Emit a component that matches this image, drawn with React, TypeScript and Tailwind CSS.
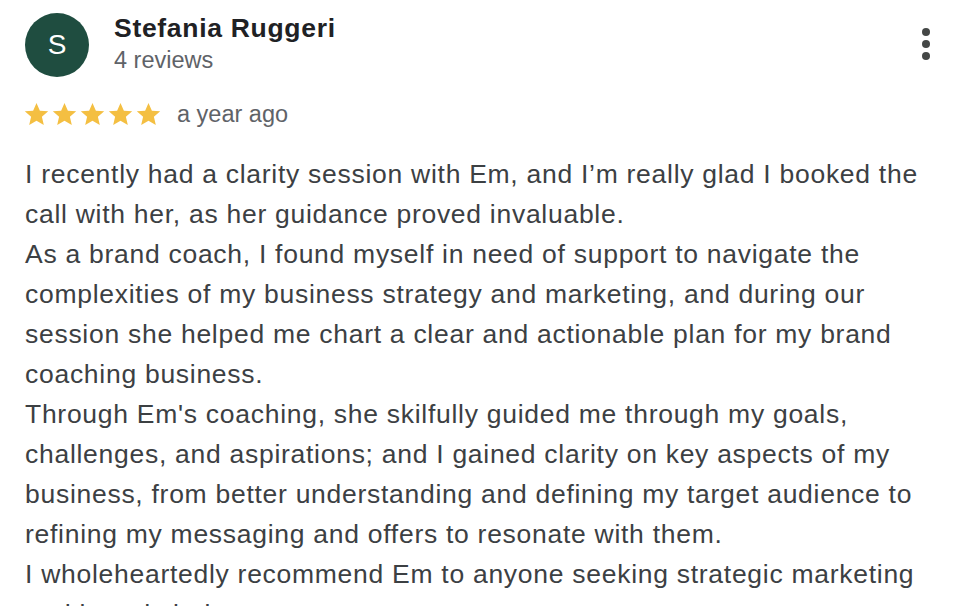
import React from "react";

const paragraphs = [
  "I recently had a clarity session with Em, and I’m really glad I booked the call with her, as her guidance proved invaluable.",
  "As a brand coach, I found myself in need of support to navigate the complexities of my business strategy and marketing, and during our session she helped me chart a clear and actionable plan for my brand coaching business.",
  "Through Em's coaching, she skilfully guided me through my goals, challenges, and aspirations; and I gained clarity on key aspects of my business, from better understanding and defining my target audience to refining my messaging and offers to resonate with them.",
  "I wholeheartedly recommend Em to anyone seeking strategic marketing and brand clarity.",
];

const Star = () => (
  <svg viewBox="0 0 24 24" className="w-[27px] h-[27px]" fill="#f4bf42">
    <path d="M12 1.8l3 6.8 7.4.6-5.6 4.9 1.7 7.2L12 17.5l-6.5 3.8 1.7-7.2-5.6-4.9 7.4-.6z" />
  </svg>
);

const App: React.FC = () => {
  return (
    <div className="w-[978px] h-[606px] overflow-hidden bg-white font-['Liberation_Sans',Arial,sans-serif]">
      <div className="flex items-start pl-[25px] pr-[48px] pt-[12px]">
        <div className="mt-[1px] w-[64px] h-[64px] rounded-full bg-[#1f4d40] flex items-center justify-center text-white text-[28px] leading-none shrink-0">
          S
        </div>
        <div className="ml-[25px] flex-1">
          <div className="text-[26.5px] tracking-[0.7px] font-bold text-[#202124] leading-[32px]">Stefania Ruggeri</div>
          <div className="text-[23.5px] text-[#5f6368] leading-[28px] mt-[2px]">4 reviews</div>
        </div>
        <div className="flex flex-col gap-[4px] pt-[16px]">
          <span className="w-[8px] h-[8px] rounded-full bg-[#444746]" />
          <span className="w-[8px] h-[8px] rounded-full bg-[#444746]" />
          <span className="w-[8px] h-[8px] rounded-full bg-[#444746]" />
        </div>
      </div>
      <div className="flex items-center pl-[23px] mt-[23px] h-[28px]">
        <div className="flex gap-[1px]">
          <Star />
          <Star />
          <Star />
          <Star />
          <Star />
        </div>
        <span className="ml-[15px] text-[23.5px] text-[#5f6368] leading-[28px]">a year ago</span>
      </div>
      <div className="pl-[25px] w-[935px] mt-[26px] text-[26.5px] tracking-[0.72px] leading-[40px] text-[#3c4043]">
        {paragraphs.map((p, i) => (
          <p key={i}>{p}</p>
        ))}
      </div>
    </div>
  );
};

export default App;
